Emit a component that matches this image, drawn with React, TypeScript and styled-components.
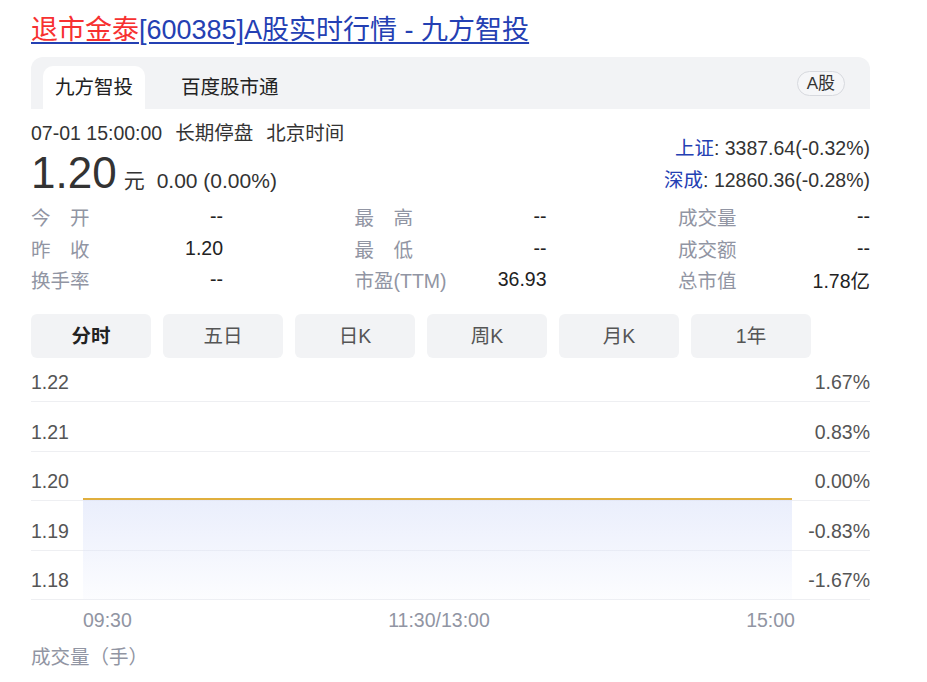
import React from "react";
import styled, { createGlobalStyle } from "styled-components";

const GlobalStyle = createGlobalStyle`
  body {
    margin: 0;
    background: #fff;
    font-family: "Liberation Sans", Arial, "Noto Sans CJK SC", sans-serif;
    color: #222;
  }
`;

const stats = [
  [
    { label: "今开", value: "--" },
    { label: "昨收", value: "1.20" },
    { label: "换手率", value: "--" },
  ],
  [
    { label: "最高", value: "--" },
    { label: "最低", value: "--" },
    { label: "市盈(TTM)", value: "36.93" },
  ],
  [
    { label: "成交量", value: "--" },
    { label: "成交额", value: "--" },
    { label: "总市值", value: "1.78亿" },
  ],
];

const periods = ["分时", "五日", "日K", "周K", "月K", "1年"];

const axisRows = [
  { left: "1.22", right: "1.67%" },
  { left: "1.21", right: "0.83%" },
  { left: "1.20", right: "0.00%" },
  { left: "1.19", right: "-0.83%" },
  { left: "1.18", right: "-1.67%" },
];

const App = () => {
  return (
    <Page>
      <GlobalStyle />
      <Title href="#">
        <TitleRed>退市金泰</TitleRed>[600385]A股实时行情 - 九方智投
      </Title>

      <TabBar>
        <SourceTab $active>九方智投</SourceTab>
        <SourceTab>百度股市通</SourceTab>
        <Badge>A股</Badge>
      </TabBar>

      <Header>
        <div>
          <TimeRow>
            <span>07-01 15:00:00</span>
            <span>长期停盘</span>
            <span>北京时间</span>
          </TimeRow>
          <PriceRow>
            <BigPrice>1.20</BigPrice>
            <Unit>元</Unit>
            <Change>0.00 (0.00%)</Change>
          </PriceRow>
        </div>
        <IndexList>
          <IndexLine>
            <IndexName>上证</IndexName>: 3387.64(-0.32%)
          </IndexLine>
          <IndexLine>
            <IndexName>深成</IndexName>: 12860.36(-0.28%)
          </IndexLine>
        </IndexList>
      </Header>

      <StatsGrid>
        {stats.map((col, i) => (
          <StatCol key={i}>
            {col.map((s) => (
              <StatRow key={s.label}>
                <StatLabel>{s.label}</StatLabel>
                <StatValue>{s.value}</StatValue>
              </StatRow>
            ))}
          </StatCol>
        ))}
      </StatsGrid>

      <PeriodTabs>
        {periods.map((p, i) => (
          <PeriodTab key={p} $active={i === 0}>
            {p}
          </PeriodTab>
        ))}
      </PeriodTabs>

      <Chart>
        {axisRows.map((r) => (
          <AxisRow key={r.left}>
            <AxisLabel>{r.left}</AxisLabel>
            <AxisLabel>{r.right}</AxisLabel>
          </AxisRow>
        ))}
        <PriceArea>
          <PriceLine />
          <PriceFill />
        </PriceArea>
      </Chart>

      <TimeAxis>
        <span>09:30</span>
        <span>11:30/13:00</span>
        <span>15:00</span>
      </TimeAxis>

      <VolumeLabel>成交量（手）</VolumeLabel>
    </Page>
  );
};

export default App;

const Page = styled.div`
  width: 839px;
  padding: 13px 0 0 31px;
`;

const Title = styled.a`
  display: inline-block;
  font-size: 27px;
  line-height: 34px;
  color: #2440b3;
  text-decoration: underline;
  text-underline-offset: 3px;
`;

const TitleRed = styled.span`
  color: #f73131;
`;

const TabBar = styled.div`
  display: flex;
  align-items: flex-end;
  gap: 24px;
  margin-top: 10px;
  height: 52px;
  padding: 0 25px 0 12px;
  box-sizing: border-box;
  background: #f2f3f5;
  border-radius: 12px 12px 0 0;
`;

const SourceTab = styled.div<{ $active?: boolean }>`
  height: 43px;
  line-height: 43px;
  padding: 0 12px;
  font-size: 19.5px;
  color: #222;
  background: ${(p) => (p.$active ? "#fff" : "transparent")};
  border-radius: 10px 10px 0 0;
`;

const Badge = styled.div`
  align-self: center;
  margin-left: auto;
  height: 25px;
  line-height: 23px;
  padding: 0 9px;
  box-sizing: border-box;
  font-size: 17px;
  color: #333;
  border: 1px solid #d7d9de;
  border-radius: 13px;
  background: #f5f6f8;
`;

const Header = styled.div`
  display: flex;
  justify-content: space-between;
  margin-top: 11px;
`;

const TimeRow = styled.div`
  display: flex;
  gap: 13px;
  font-size: 19.5px;
  line-height: 26px;
  color: #333;
`;

const PriceRow = styled.div`
  display: flex;
  align-items: baseline;
  margin-top: 4px;
  height: 46px;
  color: #333;
`;

const BigPrice = styled.span`
  font-size: 44px;
  line-height: 46px;
`;

const Unit = styled.span`
  font-size: 21px;
  margin-left: 7px;
`;

const Change = styled.span`
  font-size: 21px;
  margin-left: 12px;
`;

const IndexList = styled.div`
  padding-top: 12px;
  text-align: right;
`;

const IndexLine = styled.div`
  font-size: 19.5px;
  line-height: 32px;
  color: #333;
`;

const IndexName = styled.span`
  color: #2440b3;
`;

const StatsGrid = styled.div`
  display: grid;
  grid-template-columns: repeat(3, 192px);
  justify-content: space-between;
  margin-top: 5px;
`;

const StatCol = styled.div`
  display: flex;
  flex-direction: column;
`;

const StatRow = styled.div`
  display: flex;
  justify-content: space-between;
  align-items: center;
  height: 31.5px;
  font-size: 19.5px;
`;

const StatLabel = styled.span`
  display: inline-block;
  min-width: 3em;
  text-align-last: justify;
  color: #9195a3;
`;

const StatValue = styled.span`
  color: #222;
`;

const PeriodTabs = styled.div`
  display: flex;
  gap: 12px;
  margin-top: 18.5px;
`;

const PeriodTab = styled.div<{ $active?: boolean }>`
  width: 120px;
  height: 44px;
  line-height: 44px;
  text-align: center;
  font-size: 19.5px;
  font-weight: ${(p) => (p.$active ? 700 : 400)};
  color: ${(p) => (p.$active ? "#222" : "#555")};
  background: #f2f3f5;
  border-radius: 6px;
`;

const Chart = styled.div`
  position: relative;
`;

const AxisRow = styled.div`
  display: flex;
  justify-content: space-between;
  padding: 18.5px 0 8px;
  line-height: 22px;
  font-size: 19.5px;
  border-bottom: 1px solid #eeeff2;

  &:first-child {
    padding-top: 13px;
  }
`;

const AxisLabel = styled.span`
  color: #555;
`;

const PriceArea = styled.div`
  position: absolute;
  left: 52px;
  width: 709px;
  top: 140px;
  bottom: 0;
  display: flex;
  flex-direction: column;
`;

const PriceLine = styled.div`
  height: 2px;
  background: #e0af3e;
`;

const PriceFill = styled.div`
  flex: 1;
  background: linear-gradient(
    to bottom,
    rgba(220, 227, 250, 0.6),
    rgba(235, 239, 252, 0.15)
  );
`;

const TimeAxis = styled.div`
  display: flex;
  justify-content: space-between;
  width: 712px;
  margin: 9px 0 0 52px;
  font-size: 19.5px;
  line-height: 22px;
  color: #9195a3;
`;

const VolumeLabel = styled.div`
  margin-top: 15px;
  font-size: 19.5px;
  line-height: 22px;
  color: #9195a3;
`;
